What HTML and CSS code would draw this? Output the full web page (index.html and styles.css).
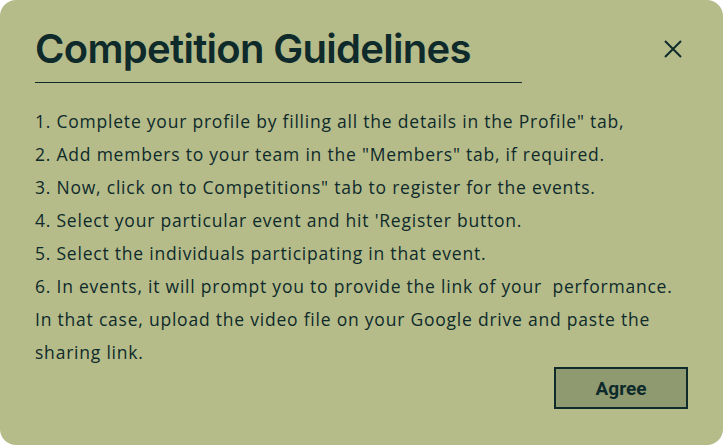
FILE: index.html
```html
<!DOCTYPE html>
<html>
<head>
<meta charset="utf-8">
<link rel="stylesheet" href="styles.css">
</head>
<body>
<div class="modal">
  <div class="header">
    <h1 class="title">Competition Guidelines</h1>
    <button class="close" aria-label="Close">
      <svg width="18" height="18" viewBox="0 0 18 18"><path d="M1 1L17 17M17 1L1 17" stroke="#0e2a2a" stroke-width="2" fill="none"/></svg>
    </button>
  </div>
  <div class="rule"></div>
  <div class="body">
    <p>1. Complete your profile by filling all the details in the Profile" tab,</p>
    <p>2. Add members to your team in the "Members" tab, if required.</p>
    <p>3. Now, click on to Competitions" tab to register for the events.</p>
    <p>4. Select your particular event and hit 'Register button.</p>
    <p>5. Select the individuals participating in that event.</p>
    <p>6. In events, it will prompt you to provide the link of your &nbsp;performance.<br>In that case, upload the video file on your Google drive and paste the<br>sharing link.</p>
  </div>
  <div class="footer">
    <button class="agree">Agree</button>
  </div>
</div>
</body>
</html>
```
FILE: styles.css
```css
html, body { margin: 0; padding: 0; background: #fff; }
.modal {
  width: 723px;
  height: 445px;
  box-sizing: border-box;
  background: #b5bc8a;
  border-radius: 16px;
  padding: 24px 35px 0 35px;
  color: #0e2a2a;
  display: flex;
  flex-direction: column;
}
.header {
  display: flex;
  align-items: center;
  justify-content: space-between;
}
.title {
  margin: 0;
  font-family: "Inter", sans-serif;
  font-weight: 600;
  font-size: 40px;
  line-height: 50px;
  letter-spacing: -0.7px;
}
.close {
  background: none;
  border: none;
  padding: 0;
  margin-right: 6px;
  width: 18px;
  height: 18px;
  display: flex;
}
.rule {
  width: 487px;
  height: 1px;
  background: #0e2a2a;
  margin-top: 8px;
}
.body {
  margin-top: 22px;
  font-family: "Open Sans", sans-serif;
  font-size: 17.5px;
  letter-spacing: 0.78px;
  line-height: 33px;
}
.body p { margin: 0; }
.footer {
  display: flex;
  justify-content: flex-end;
  margin-top: -2px;
}
.agree {
  width: 134px;
  height: 42px;
  box-sizing: border-box;
  border: 2px solid #0e2a2a;
  background: #8f9a71;
  color: #0e2a2a;
  font-family: "Roboto", sans-serif;
  font-weight: 700;
  font-size: 19px;
}
```
